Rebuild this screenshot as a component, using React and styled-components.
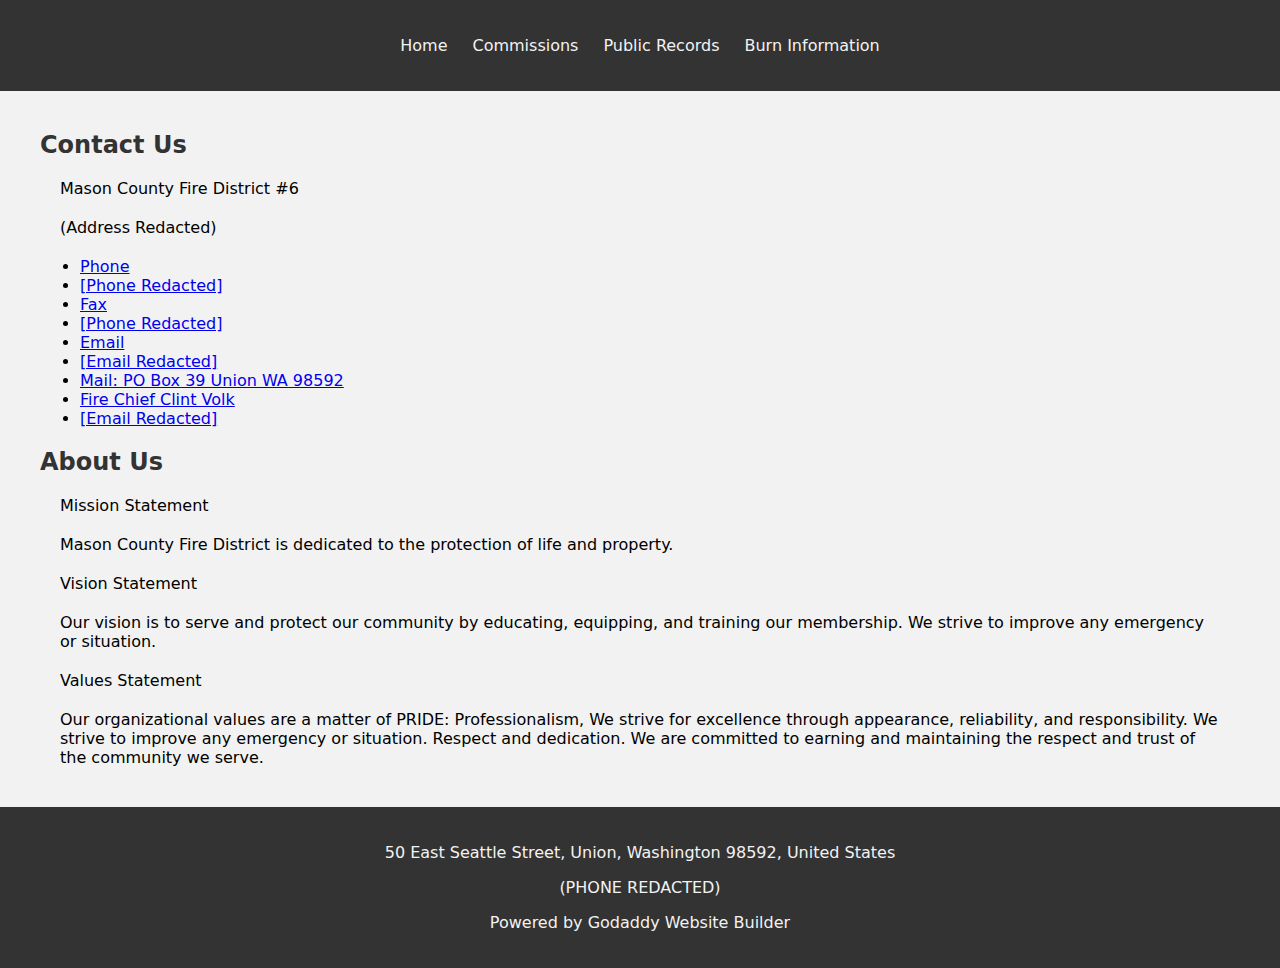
import React from 'react';
import styled, {createGlobalStyle} from 'styled-components';

const GlobalStyle = createGlobalStyle`
  body {
    margin: 0;
    background: #f2f2f2;
    font-family: "DejaVu Sans", Verdana, sans-serif;
    font-size: 16px;
    line-height: 19px;
    color: #000;
  }
`;

const Header = styled.header`
  background: #333;
  padding: 20px;
`;
const NavList = styled.ul`
  display: flex;
  justify-content: center;
  gap: 25px;
  list-style: none;
  margin: 0;
  padding: 0;
`;
const NavLink = styled.a`
  display: block;
  padding: 16px 0;
  color: #f2f2f2;
  text-decoration: none;
`;

const Main = styled.main`
  padding: 20px 40px;
`;
const Heading = styled.h2`
  margin: 20px 0;
  font-size: 24px;
  line-height: 28px;
  color: #333;
`;
const Body = styled.div`
  padding: 0 20px;
`;
const Para = styled.p`
  margin: 20px 0;
`;
const LinkList = styled.ul`
  margin: 20px 0;
  padding-left: 20px;
`;
const TextLink = styled.a`
  color: #0000ee;
`;

const Footer = styled.footer`
  background: #333;
  color: #f2f2f2;
  text-align: center;
  padding: 20px;
`;
const FootLine = styled.p`
  margin: 16px 0;
`;

const navItems = ['Home', 'Commissions', 'Public Records', 'Burn Information'];
const contactLinks = [
  'Phone',
  '[Phone Redacted]',
  'Fax',
  '[Phone Redacted]',
  'Email',
  '[Email Redacted]',
  'Mail: PO Box 39 Union WA 98592',
  'Fire Chief Clint Volk',
  '[Email Redacted]',
];

export default function App() {
  return (
    <>
      <GlobalStyle />
      <Header>
        <nav>
          <NavList>
            {navItems.map(item => (
              <li key={item}><NavLink href="#">{item}</NavLink></li>
            ))}
          </NavList>
        </nav>
      </Header>
      <Main>
        <section>
          <Heading>Contact Us</Heading>
          <Body>
            <Para>Mason County Fire District #6</Para>
            <Para>(Address Redacted)</Para>
            <LinkList>
              {contactLinks.map((item, i) => (
                <li key={i}><TextLink href="#">{item}</TextLink></li>
              ))}
            </LinkList>
          </Body>
        </section>
        <section>
          <Heading>About Us</Heading>
          <Body>
            <Para>Mission Statement</Para>
            <Para>Mason County Fire District is dedicated to the protection of life and property.</Para>
            <Para>Vision Statement</Para>
            <Para>Our vision is to serve and protect our community by educating, equipping, and training our membership. We strive to improve any emergency or situation.</Para>
            <Para>Values Statement</Para>
            <Para>Our organizational values are a matter of PRIDE: Professionalism, We strive for excellence through appearance, reliability, and responsibility. We strive to improve any emergency or situation. Respect and dedication. We are committed to earning and maintaining the respect and trust of the community we serve.</Para>
          </Body>
        </section>
      </Main>
      <Footer>
        <FootLine>50 East Seattle Street, Union, Washington 98592, United States</FootLine>
        <FootLine>(PHONE REDACTED)</FootLine>
        <FootLine>Powered by Godaddy Website Builder</FootLine>
      </Footer>
    </>
  );
}
